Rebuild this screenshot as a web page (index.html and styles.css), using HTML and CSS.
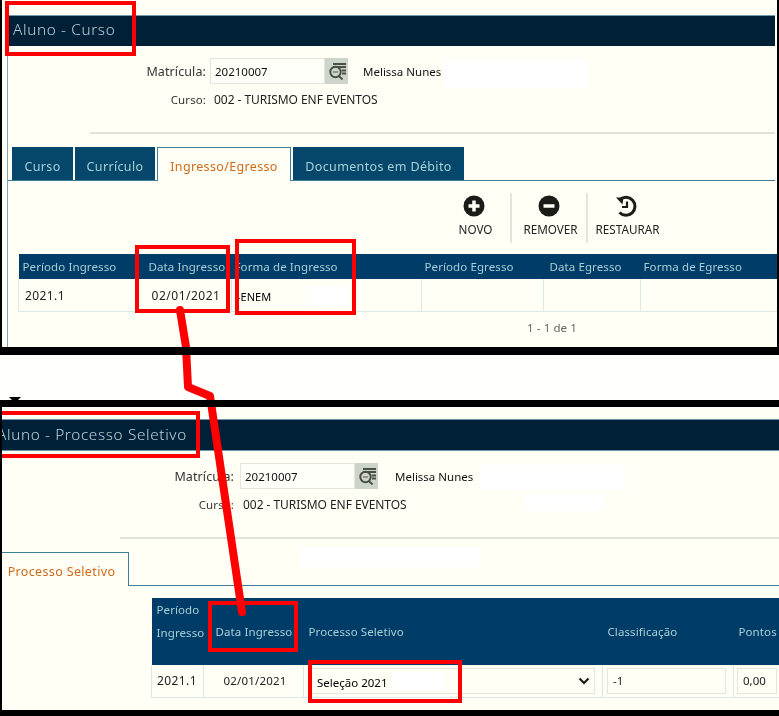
FILE: index.html
```html
<!DOCTYPE html>
<html lang="pt-BR">
<head>
<meta charset="utf-8">
<title>Aluno</title>
<link rel="stylesheet" href="styles.css">
</head>
<body>
<div class="page">
  <section class="shot shot-a">
    <h1 class="title">Aluno - Curso</h1>
    <div class="content content-a">
      <div class="form form-a">
        <div class="row">
          <span class="label">Matrícula:</span>
          <span class="input">20210007</span>
          <span class="lookup">
            <svg width="20" height="20" viewBox="0 0 20 20"><path d="M6 3h13M6 6h13M15 9.500h4M15 12.500h4" class="ico-line"/><circle cx="8.500" cy="11" r="5.200" class="ico-ring"/><path d="M6 11h5" class="ico-thin"/><path d="M12 15l3.500 3.500" class="ico-line"/></svg>
          </span>
          <span class="name">Melissa Nunes</span>
        </div>
        <div class="row row-course">
          <span class="label label-sm">Curso:</span>
          <span class="value">002 - TURISMO ENF EVENTOS</span>
        </div>
      </div>
      <hr class="rule rule-a">
      <nav class="tabs tabs-a">
        <span class="tab tab-1">Curso</span>
        <span class="tab tab-2">Currículo</span>
        <span class="tab tab-on tab-3">Ingresso/Egresso</span>
        <span class="tab tab-4">Documentos em Débito</span>
      </nav>
      <div class="toolbar">
        <div class="tool tool-new">
          <svg width="22" height="22" viewBox="0 0 22 22"><circle cx="11" cy="11" r="10.500" class="ico-fill"/><path d="M11 5.500v11M5.500 11h11" class="ico-cut"/></svg>
          <span>NOVO</span>
        </div>
        <div class="tool tool-rem">
          <svg width="22" height="22" viewBox="0 0 22 22"><circle cx="11" cy="11" r="10.500" class="ico-fill"/><path d="M5.500 11h11" class="ico-cut"/></svg>
          <span>REMOVER</span>
        </div>
        <div class="tool tool-res">
          <svg width="22" height="22" viewBox="0 0 22 22"><path d="M5 4.500A9 9 0 1 1 4.500 17.500" class="ico-arc"/><path d="M1 2.500l7.500 0-1 7z" class="ico-solid"/><path d="M12 6.500v5.500h-5" class="ico-hand"/></svg>
          <span>RESTAURAR</span>
        </div>
      </div>
      <table class="grid grid-a">
        <colgroup><col class="ca1"><col class="ca2"><col class="ca3"><col class="ca4"><col class="ca5"><col class="ca6"></colgroup>
        <thead><tr><th class="th-first">Período Ingresso</th><th class="th-date">Data Ingresso</th><th>Forma de Ingresso</th><th>Período Egresso</th><th class="th-date-out">Data Egresso</th><th>Forma de Egresso</th></tr></thead>
        <tbody><tr><td class="td-per">2021.1</td><td class="td-date">02/01/2021</td><td class="td-enem">-<b>ENEM</b></td><td></td><td></td><td></td></tr></tbody>
      </table>
      <p class="pager">1 - 1 de 1</p>
    </div>
  </section>
  <div class="bar"></div>
  <div class="gap"></div>
  <div class="bar bar-b"></div>
  <section class="shot shot-b">
    <h1 class="title"><span class="clip">Aluno - Processo Seletivo</span></h1>
    <div class="content content-b">
      <div class="form form-b">
        <div class="row">
          <span class="label">Matrícula:</span>
          <span class="input">20210007</span>
          <span class="lookup">
            <svg width="20" height="20" viewBox="0 0 20 20"><path d="M6 3h13M6 6h13M15 9.500h4M15 12.500h4" class="ico-line"/><circle cx="8.500" cy="11" r="5.200" class="ico-ring"/><path d="M6 11h5" class="ico-thin"/><path d="M12 15l3.500 3.500" class="ico-line"/></svg>
          </span>
          <span class="name">Melissa Nunes</span>
        </div>
        <div class="row row-course">
          <span class="label label-sm">Curso:</span>
          <span class="value">002 - TURISMO ENF EVENTOS</span>
        </div>
      </div>
      <hr class="rule rule-b">
      <nav class="tabs tabs-b">
        <span class="tab tab-on tab-p">Processo Seletivo</span>
      </nav>
      <table class="grid grid-b">
        <colgroup><col class="cb1"><col class="cb2"><col class="cb3"><col class="cb4"><col class="cb5"></colgroup>
        <thead><tr><th class="th-wrap">Período<br>Ingresso</th><th class="th-date2">Data Ingresso</th><th>Processo Seletivo</th><th>Classificação</th><th>Pontos</th></tr></thead>
        <tbody><tr>
          <td class="td-per2">2021.1</td>
          <td class="td-date2">02/01/2021</td>
          <td class="td-field td-wide"><span class="field field-sel"><b>Seleção 2021</b><svg width="12" height="8" viewBox="0 0 12 8"><path d="M1.500 1.500L6 6l4.500-4.500" class="ico-chev"/></svg></span></td>
          <td class="td-field td-wide"><span class="field">-1</span></td>
          <td class="td-field"><span class="field">0,00</span></td>
        </tr></tbody>
      </table>
    </div>
  </section>
  <div class="bar bar-end"></div>
  <svg class="marks" width="779" height="716" viewBox="0 0 779 716">
    <rect class="mask" x="444" y="60" width="144" height="28"/>
    <rect class="mask" x="306" y="286" width="41" height="20"/>
    <rect class="mask" x="480" y="465" width="145" height="25"/>
    <rect class="mask" x="525" y="493" width="80" height="18"/>
    <rect class="mask" x="300" y="547" width="180" height="20"/>
    <rect class="mask" x="392" y="672" width="52" height="18"/>
    <path class="tick" d="M9 397h12l-3 3h-6z"/>
    <rect class="box" x="7" y="3" width="127" height="51"/>
    <rect class="box" x="137" y="247" width="91" height="64"/>
    <rect class="box" x="237" y="241" width="117" height="72"/>
    <path class="box" d="M2 413H198V456H2"/>
    <rect class="box" x="210" y="603" width="86" height="47"/>
    <rect class="box" x="310" y="662" width="150" height="39"/>
    <path class="arrow" d="M180 310L186 347L188 387L210 396L242 612"/>
  </svg>
</div>
</body>
</html>
```
FILE: styles.css
```css
* { box-sizing: border-box; }
html, body { margin: 0; padding: 0; }
body {
  background: #fffffb;
  font-family: "Noto Sans", "Open Sans", sans-serif;
  font-size: 12px;
  color: #222;
}
.page { position: relative; width: 779px; height: 716px; overflow: hidden; }

.shot { background: #fffff5; border-left: 2px solid #000; overflow: hidden; filter: blur(0.3px); }
.shot-a { height: 347px; padding: 15px 2px 0 5px; border-right: 2px solid #000; }
.shot-b { height: 303px; padding-top: 12px; }

.title {
  margin: 0;
  background: #002038;
  border-top: 1px solid #6d9bab;
  color: #b6d5d8;
  font-size: 15.300px;
  font-weight: 300;
  letter-spacing: 0.650px;
  line-height: 27px;
  height: 31px;
  padding-left: 6px;
  white-space: nowrap;
}
.shot-b .title { padding-left: 0; height: 32px; border-bottom: 1px solid #6d9bab; line-height: 29px; }
.clip { display: block; margin-left: -5px; }

.content-a { height: 301px; border-left: 1px solid #7aa8b8; }
.form { display: flex; flex-direction: column; }
.form-a { padding: 12px 0 0 0; }
.form-b { padding: 12px 0 0 0; }
.row { display: flex; align-items: center; height: 26px; }
.row-course { margin-top: 2px; }
.label { text-align: right; color: #333; font-size: 12.500px; letter-spacing: 0.100px; padding-right: 4px; }
.form-a .label { width: 202px; }
.form-b .label { width: 238px; padding-right: 6px; }
.label.label-sm { font-size: 11.500px; }
.input {
  width: 115px;
  height: 26px;
  background: #fffff9;
  border: 1px solid #e3e6da;
  padding: 0 4px;
  line-height: 25px;
  font-size: 11.500px;
  color: #111;
}
.lookup {
  width: 23px;
  height: 26px;
  background: #cdd4c9;
  display: flex;
  align-items: center;
  justify-content: center;
}
.name { margin-left: 15px; font-size: 11.500px; color: #111; }
.form-b .name { margin-left: 17px; }
.value { font-size: 12px; color: #222; padding-left: 4px; letter-spacing: -0.050px; }
.form-b .value { padding-left: 3px; }

.rule { border: 0; height: 2px; background: #dfe2d6; margin: 0; }
.rule-a { margin: 20px 0 0 82px; }
.rule-b { margin: 20px 0 0 118px; }

.tabs { display: flex; align-items: flex-end; border-bottom: 1px solid #3d7f95; }
.tabs-a { margin-top: 13px; height: 34px; gap: 2px; padding-left: 4px; }
.tabs-b { margin-top: 13px; height: 34px; margin-left: 0; }
.tab {
  height: 33px;
  background: #04476a;
  color: #a9cfd6;
  font-size: 12.500px;
  letter-spacing: 0.350px;
  line-height: 39px;
  text-align: center;
  white-space: nowrap;
}
.tab-on {
  height: 34px;
  margin-bottom: -1px;
  background: #fffff5;
  color: #d0691a;
  border: 1px solid #3d7f95;
  border-bottom: 0;
  line-height: 38px;
}
.tab-1 { width: 61px; }
.tab-2 { width: 80px; }
.tab-3 { width: 134px; }
.tab-4 { width: 171px; }
.tab-p { width: 127px; border-left: 0; padding-right: 7px; }

.toolbar { display: flex; height: 50px; margin: 12px 0 11px 436px; font-size: 11.700px; color: #222; }
.tool {
  width: 76px;
  display: flex;
  flex-direction: column;
  align-items: center;
  padding-top: 2px;
  gap: 4px;
  border-right: 2px solid #e4e6da;
}
.tool span { margin-left: 3px; }
.tool-new { width: 68px; padding-right: 6px; padding-left: 0; }
.tool-res { border-right: 0; }
.ico-fill { fill: #1b1b18; }
.ico-cut { stroke: #fffff5; stroke-width: 3.500; fill: none; }
.ico-arc { stroke: #1b1b18; stroke-width: 3; fill: none; }
.ico-solid { fill: #1b1b18; }
.ico-hand { stroke: #1b1b18; stroke-width: 2.200; fill: none; }
.ico-line { stroke: #4a5048; stroke-width: 1.800; fill: none; }
.ico-ring { stroke: #4a5048; stroke-width: 2; fill: none; }
.ico-thin { stroke: #7b8277; stroke-width: 1.500; fill: none; }
.ico-chev { stroke: #1b1b18; stroke-width: 2.200; fill: none; }

.grid { border-collapse: collapse; table-layout: fixed; }
.grid th {
  background: #003c68;
  color: #a9cfd6;
  font-size: 11.500px;
  font-weight: 400;
  letter-spacing: 0.100px;
  text-align: left;
  white-space: nowrap;
}
.grid td { border: 1px solid #dbe8e4; border-top: 0; padding: 0; font-size: 12px; color: #222; }
.grid-a { margin-left: 10px; width: 760px; }
.grid-a th { height: 25px; padding: 0 0 0 3px; }
.grid-a td { height: 32px; padding-top: 2px; }
.ca1 { width: 118px; }
.ca2 { width: 95px; }
.ca3 { width: 190px; }
.ca4 { width: 122px; }
.ca5 { width: 97px; }
.ca6 { width: 138px; }
.grid-a th.th-first { padding-left: 4px; }
.grid-a th.th-date { padding-left: 12px; }
.grid-a th.th-date-out { padding-left: 6px; }
.td-per { padding-left: 6px !important; letter-spacing: 0.400px; }
.td-date { text-align: center; letter-spacing: 0.500px; padding-left: 4px !important; }
.td-enem { padding-left: 5px !important; padding-top: 3px !important; font-size: 11px !important; }
.td-enem b, .field-sel b { font-weight: 400; color: #000; }

.pager { margin: 8px 0 0 0; padding-left: 519px; font-size: 11.500px; color: #666; letter-spacing: 0.100px; }

.grid-b { margin: 12px 0 0 149px; width: 629px; }
.grid-b th { height: 67px; padding: 0 0 0 5px; line-height: 23px; }
.grid-b td { height: 32px; }
.cb1 { width: 52px; }
.cb2 { width: 100px; }
.cb3 { width: 299px; }
.cb4 { width: 131px; }
.cb5 { width: 47px; }
.grid-b th.th-date2 { padding-left: 12px; }
.th-wrap { vertical-align: top; padding-top: 0 !important; }
.td-per2 { padding-left: 5px !important; letter-spacing: 0.400px; }
.td-date2 { text-align: center; font-size: 11.500px !important; letter-spacing: 0.200px; padding-left: 3px !important; }
.td-field { padding: 0 3px !important; }
.td-field.td-wide { padding: 0 7px 0 4px !important; }
.field {
  display: flex;
  align-items: center;
  justify-content: space-between;
  height: 26px;
  padding: 0 5px;
  border: 1px solid #e3e6da;
  font-size: 11.500px;
  color: #222;
}
.field-sel { padding: 0 4px 0 8px; font-size: 11.500px; }
.field-sel b { padding-top: 3px; }

.bar { height: 8px; background: #000; position: relative; z-index: 2; }
.gap { height: 45px; background: #fffffb; }
.bar-b { height: 7px; }
.bar-end { height: 6px; }

.marks { position: absolute; left: 0; top: 0; z-index: 1; pointer-events: none; }
.mask { fill: #fff; }
.tick { fill: #000; }
.box { fill: none; stroke: #f00; stroke-width: 4; }
.arrow { fill: none; stroke: #f00; stroke-width: 8; stroke-linejoin: round; stroke-linecap: round; }
```
